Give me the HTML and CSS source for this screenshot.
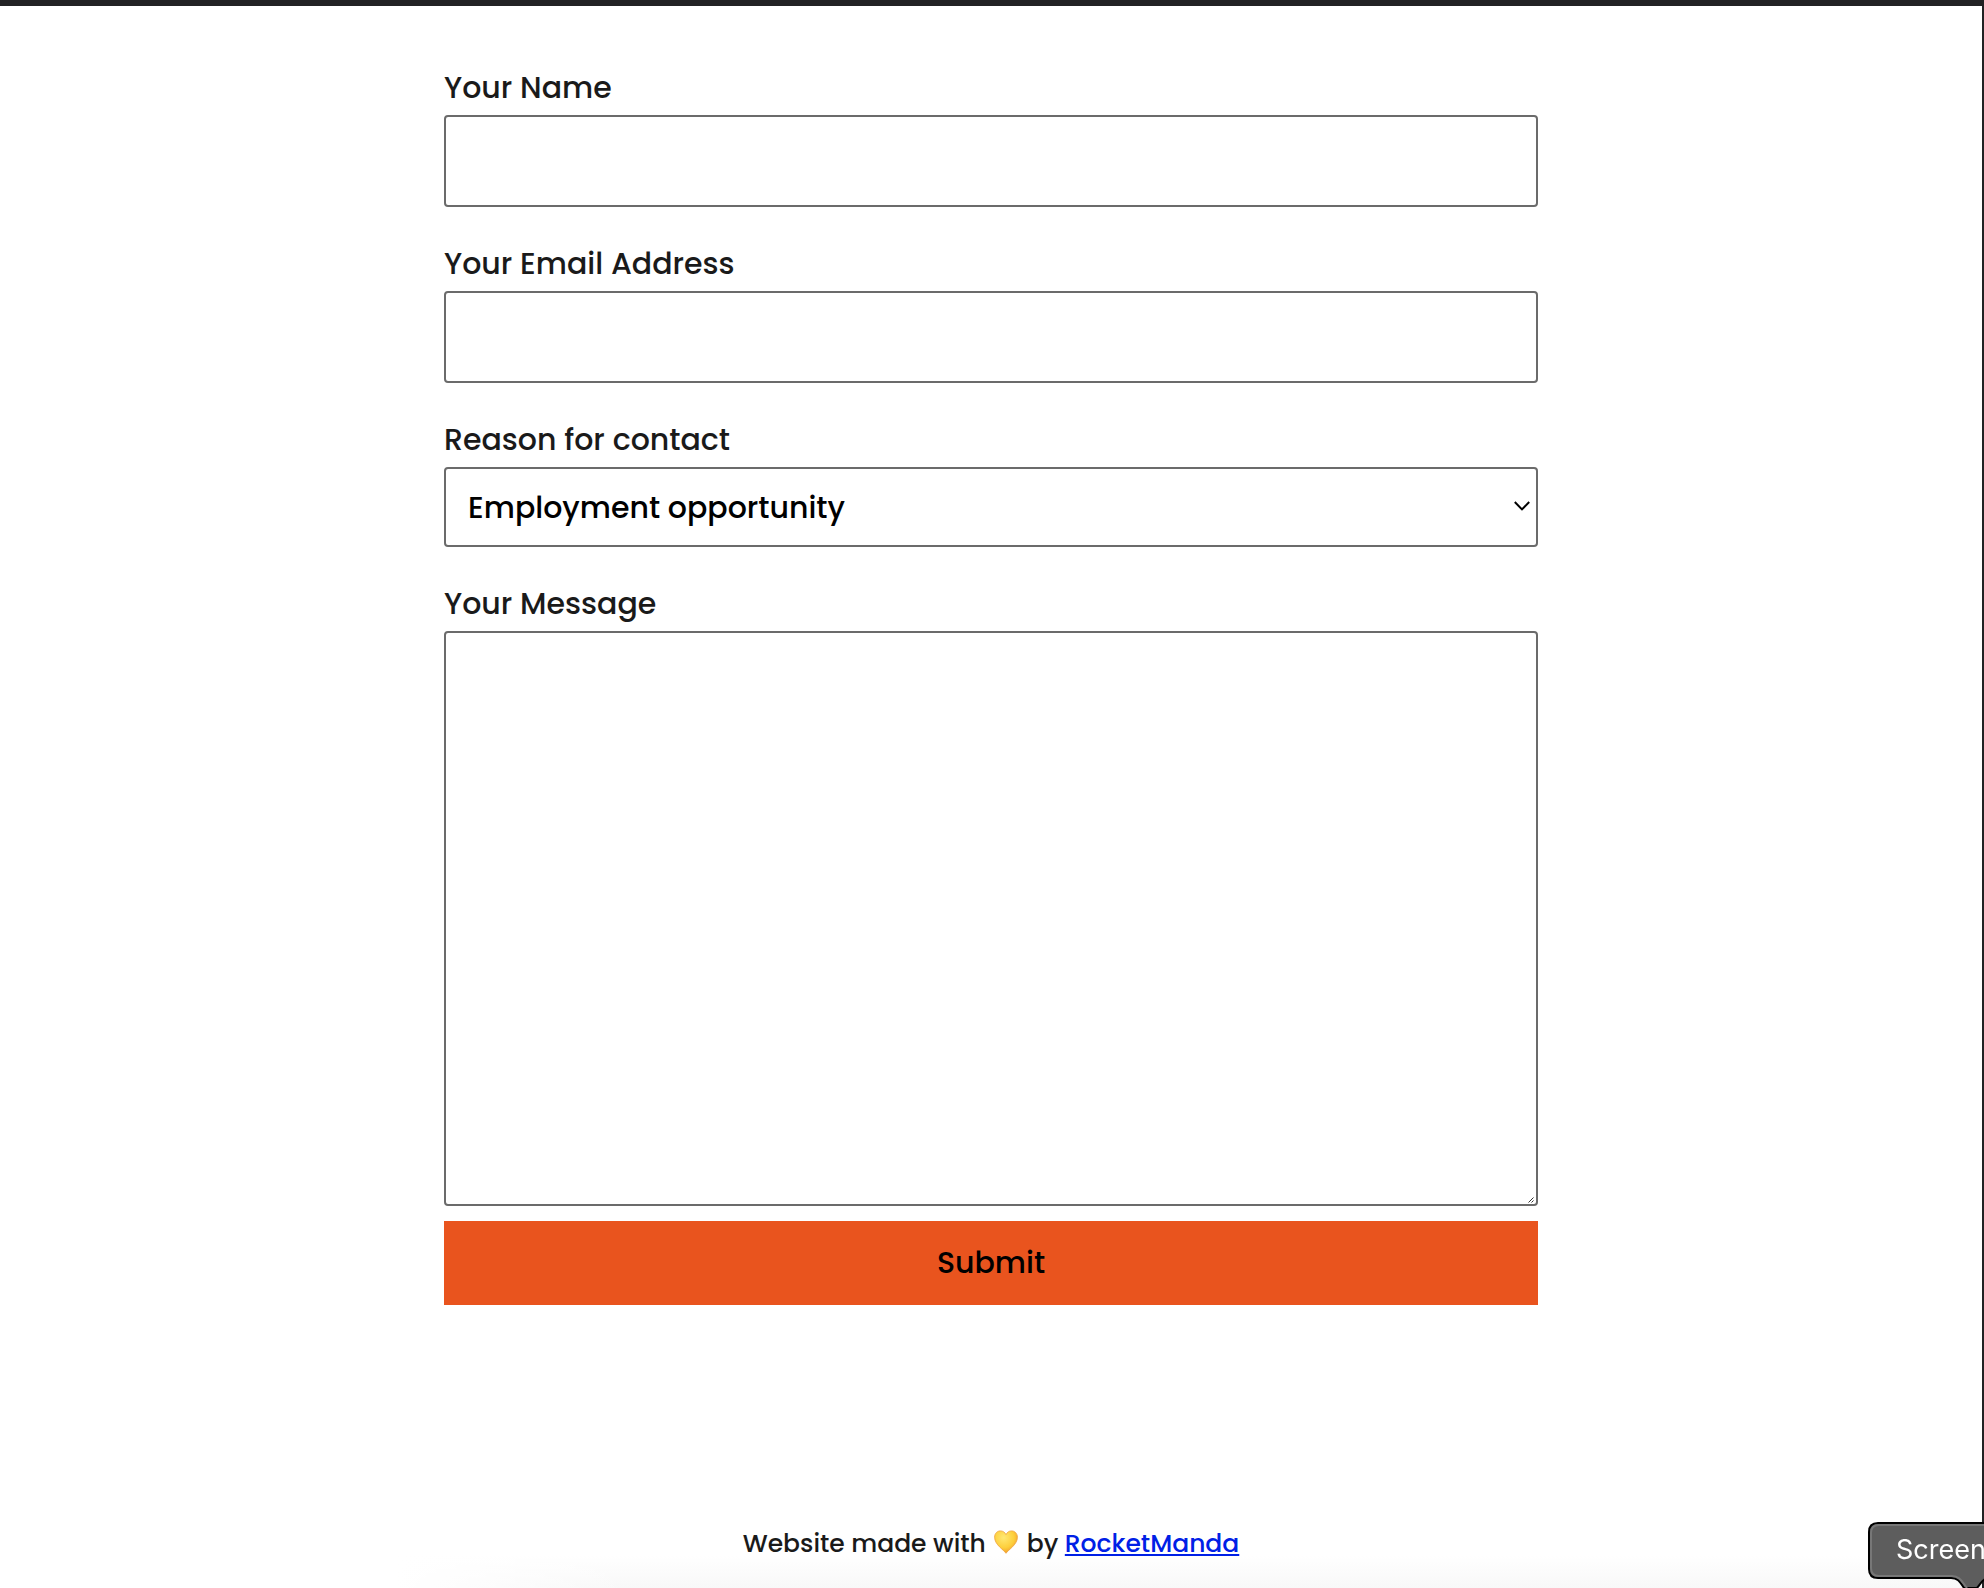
FILE: index.html
```html
<!DOCTYPE html>
<html lang="en">
<head>
<meta charset="utf-8">
<meta name="viewport" content="width=device-width, initial-scale=1">
<title>Contact</title>
<link rel="stylesheet" href="styles.css">
</head>
<body>
<main class="page">
  <form class="contact-form">
    <div class="field">
      <label for="name">Your Name</label>
      <input class="control" id="name" type="text">
    </div>
    <div class="field">
      <label for="email">Your Email Address</label>
      <input class="control" id="email" type="email">
    </div>
    <div class="field">
      <label for="reason">Reason for contact</label>
      <div class="select-wrap">
        <select class="control" id="reason"><option>Employment opportunity</option></select>
        <svg class="chevron" viewBox="0 0 16 10" aria-hidden="true"><path d="M.8 1 8 8.400 15.200 1"/></svg>
      </div>
    </div>
    <div class="field">
      <label for="message">Your Message</label>
      <div class="message-wrap">
        <textarea class="control" id="message"></textarea>
        <svg class="grip" viewBox="0 0 6 6" aria-hidden="true"><path d="M0.5 5.5 5.5 0.5M3.5 5.5 5.5 3.5"/></svg>
      </div>
    </div>
    <button class="submit" type="submit">Submit</button>
  </form>
  <footer class="footer">
    <p>Website made with
      <svg class="heart" viewBox="0 0 24 24" role="img" aria-label="yellow heart">
        <defs>
          <radialGradient id="gold" cx=".4" cy=".3" r=".75">
            <stop offset="0" stop-color="#ffe873"/>
            <stop offset=".6" stop-color="#fdcf3c"/>
            <stop offset="1" stop-color="#f0962a"/>
          </radialGradient>
        </defs>
        <path fill="url(#gold)" stroke="#efa13c" stroke-width=".8" d="M12 23.300C9.800 19.800.6 14.800.6 7.200.6 3.400 3.200.9 6.400.9c2.600 0 4.600 1.400 5.600 3.800C13 2.300 15 .9 17.600.9c3.200 0 5.800 2.500 5.800 6.300 0 7.600-9.200 12.600-11.400 16.100z"/>
      </svg>
      by <a href="#">RocketManda</a></p>
  </footer>
</main>
<div class="tooltip" role="tooltip">
  <svg class="bubble" viewBox="0 0 160 66" aria-hidden="true">
    <path class="bubble-edge" d="M10 1H170V56H122C115 56 114 60 109 66H96C92 60 90 56 83 56H10Q1 56 1 47V10Q1 1 10 1Z"/>
    <path class="bubble-light" d="M170 3H11Q3 3 3 11V46Q3 54 11 54H84C92 54 94 60 99 66"/>
  </svg>
  <span class="tooltip-text">Screen</span>
</div>
</body>
</html>
```
FILE: styles.css
```css
* {
  box-sizing: border-box;
}

body {
  margin: 0;
  background: #fff;
  color: #1a1a1a;
  font-family: Poppins, Inter, sans-serif;
  font-size: 30px;
  font-weight: 500;
}

.page {
  display: flex;
  flex-direction: column;
  align-items: center;
  min-height: 100vh;
  padding-top: 61px;
  border-top: 6px solid #222224;
  border-right: 2px solid #222224;
}

.contact-form {
  display: flex;
  flex-direction: column;
  gap: 36px;
  width: 100%;
  max-width: 1094px;
}

.field {
  display: flex;
  flex-direction: column;
  gap: 6px;
}

label {
  line-height: 42px;
}

.control {
  display: block;
  width: 100%;
  height: 92px;
  margin: 0;
  padding: 0 22px;
  border: 2px solid #6b6b6b;
  border-radius: 4px;
  background: #fff;
  color: #000;
  font: inherit;
}

.select-wrap,
.message-wrap {
  position: relative;
}

select.control {
  height: 80px;
  appearance: none;
}

.chevron {
  position: absolute;
  top: 34px;
  right: 8px;
  width: 16px;
  height: 10px;
  fill: none;
  stroke: #000;
  stroke-width: 2;
  pointer-events: none;
}

textarea.control {
  height: 575px;
  padding: 20px 22px;
  resize: none;
}

.grip {
  position: absolute;
  right: 4px;
  bottom: 3px;
  width: 6px;
  height: 6px;
  fill: none;
  stroke: #333;
  pointer-events: none;
}

.submit {
  height: 84px;
  margin-top: -21px;
  padding: 0;
  border: 0;
  background: #e9541e;
  color: #000;
  font: inherit;
}

.footer {
  width: 100%;
  margin-top: auto;
  padding: 24px 0;
  background:
    linear-gradient(to right, #fff 20%, transparent 32%),
    linear-gradient(to top, #f8f8f8, #fff 32px);
  font-size: 25px;
  line-height: 40px;
  text-align: center;
}

.footer p {
  margin: 0;
}

.footer a {
  color: #0020e6;
  text-decoration-thickness: 2px;
  text-underline-offset: 2px;
}

.heart {
  width: 24px;
  height: 24px;
  margin: 0 2px;
  vertical-align: -2px;
}

.tooltip {
  position: fixed;
  right: 0;
  bottom: 0;
  width: 116px;
  height: 66px;
  overflow: hidden;
}

.bubble {
  position: absolute;
  top: 0;
  left: 0;
  width: 160px;
  height: 66px;
}

.bubble-edge {
  fill: #5d5d5d;
  stroke: #000;
  stroke-width: 2;
}

.bubble-light {
  fill: none;
  stroke: #777;
  stroke-width: 2;
}

.tooltip-text {
  position: relative;
  display: block;
  padding-left: 28px;
  color: #fff;
  font-family: Inter, sans-serif;
  font-size: 27px;
  font-weight: 400;
  line-height: 56px;
  white-space: nowrap;
}
```
